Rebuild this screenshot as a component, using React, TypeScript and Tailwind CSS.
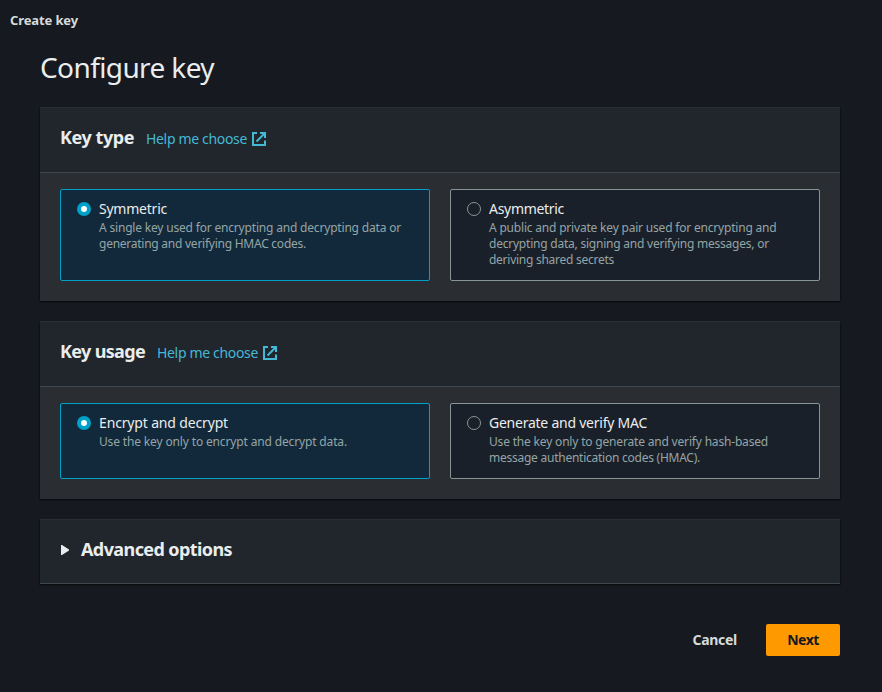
import type { ReactNode } from "react";

function Line({ className, children }: { className: string; children: ReactNode }) {
  return <span className={`block whitespace-nowrap ${className}`}>{children}</span>;
}

function ExternalIcon() {
  return (
    <svg className="size-4 shrink-0" viewBox="0 0 16 16" fill="none" stroke="currentColor" strokeWidth="2">
      <path d="M6 2H2v12h12v-4.5" />
      <path d="M9 2h5v5" />
      <path d="M5.5 10.5L13.5 2.5" />
    </svg>
  );
}

function Radio({ checked }: { checked: boolean }) {
  return (
    <span
      role="radio"
      aria-checked={checked}
      className={`mt-[3px] flex size-3.5 shrink-0 items-center justify-center rounded-full ${
        checked ? "bg-[#00a1c9]" : "border border-[#879596]"
      }`}
    >
      {checked && <span className="size-1.5 rounded-full bg-white" />}
    </span>
  );
}

function Tile({
  checked = false,
  label,
  children,
}: {
  checked?: boolean;
  label: ReactNode;
  children: ReactNode;
}) {
  return (
    <label
      className={`flex gap-2 rounded-[2px] border px-4 pt-[9px] pb-3 ${
        checked ? "border-[#00a1c9] bg-[#12293b]" : "border-[#879596] bg-[#1a2029]"
      }`}
    >
      <Radio checked={checked} />
      <span className="block">
        <span className="block text-sm leading-5 text-[#eaeded]">{label}</span>
        <span className="mt-px block text-xs leading-4 text-[#95a5a6]">{children}</span>
      </span>
    </label>
  );
}

function Panel({ title, children }: { title: ReactNode; children: ReactNode }) {
  return (
    <section className="border-t border-[#2a2e33] bg-[#2a2e33] shadow-[0_1px_1px_0_#0b0d10,1px_1px_1px_0_#111418,-1px_1px_1px_0_#111418]">
      <header className="flex h-[65px] items-center gap-3 border-b border-[#414750] bg-[#21252c] px-5 pb-1">
        {title}
        <a className="mt-0.5 flex items-center gap-1 text-sm leading-5 text-[#44b9d6]">
          <Line className="tracking-[-0.334px]">Help me choose</Line>
          <ExternalIcon />
        </a>
      </header>
      <div className="grid grid-cols-2 gap-5 px-5 pt-4 pb-5">{children}</div>
    </section>
  );
}

export default function App() {
  return (
    <div className="min-h-[692px] bg-[#16191f] font-['Noto_Sans','Liberation_Sans',sans-serif] text-[#d5dbdb]">
      <div className="px-2.5 pt-2.5 text-[13px] leading-5 font-bold tracking-[-0.12px]">Create key</div>
      <main className="mx-10 w-[800px] pt-[19px]">
        <h1 className="h-[58px] text-[28px] leading-9 tracking-[-0.605px] text-[#eaeded]">Configure key</h1>
        <div className="flex flex-col gap-5">
          <Panel
            title={
              <h2 className="pb-0.5 text-lg leading-[22px] font-bold tracking-[-0.44px] text-[#eaeded]">Key type</h2>
            }
          >
            <Tile checked label={<Line className="tracking-[-0.23px]">Symmetric</Line>}>
              <Line className="tracking-[-0.184px]">A single key used for encrypting and decrypting data or</Line>
              <Line className="tracking-[-0.25px]">generating and verifying HMAC codes.</Line>
            </Tile>
            <Tile label={<Line className="tracking-[-0.304px]">Asymmetric</Line>}>
              <Line className="tracking-[-0.194px]">A public and private key pair used for encrypting and</Line>
              <Line className="tracking-[-0.223px]">decrypting data, signing and verifying messages, or</Line>
              <Line className="tracking-[-0.262px]">deriving shared secrets</Line>
            </Tile>
          </Panel>
          <Panel
            title={
              <h2 className="pb-0.5 text-lg leading-[22px] font-bold tracking-[-0.66px] text-[#eaeded]">Key usage</h2>
            }
          >
            <Tile checked label={<Line className="tracking-[-0.155px]">Encrypt and decrypt</Line>}>
              <Line className="tracking-[-0.148px]">Use the key only to encrypt and decrypt data.</Line>
            </Tile>
            <Tile label={<Line className="tracking-[-0.241px]">Generate and verify MAC</Line>}>
              <Line className="tracking-[-0.181px]">Use the key only to generate and verify hash-based</Line>
              <Line className="tracking-[-0.249px]">message authentication codes (HMAC).</Line>
            </Tile>
          </Panel>
          <section className="flex h-[65px] items-center gap-3 border-t border-b border-t-[#2a2e33] border-b-[#414750] bg-[#21252c] px-[21px] pb-[3px] shadow-[0_1px_1px_0_#0b0d10,1px_1px_1px_0_#111418,-1px_1px_1px_0_#111418]">
            <svg className="h-2.5 w-2" viewBox="0 0 8 10" fill="#eaeded">
              <path d="M0 0h1l7 4.5v1L1 10H0z" />
            </svg>
            <h2 className="pb-0.5 text-lg leading-[22px] font-bold tracking-[-0.593px] text-[#eaeded]">
              Advanced options
            </h2>
          </section>
        </div>
        <div className="mt-10 flex h-8 items-center justify-end text-sm leading-5 font-bold">
          <button className="mr-[29px] tracking-[-0.288px]">Cancel</button>
          <button className="h-8 w-[74px] rounded-[2px] bg-[#ff9900] tracking-[-0.5px] text-[#16191f]">Next</button>
        </div>
      </main>
    </div>
  );
}
